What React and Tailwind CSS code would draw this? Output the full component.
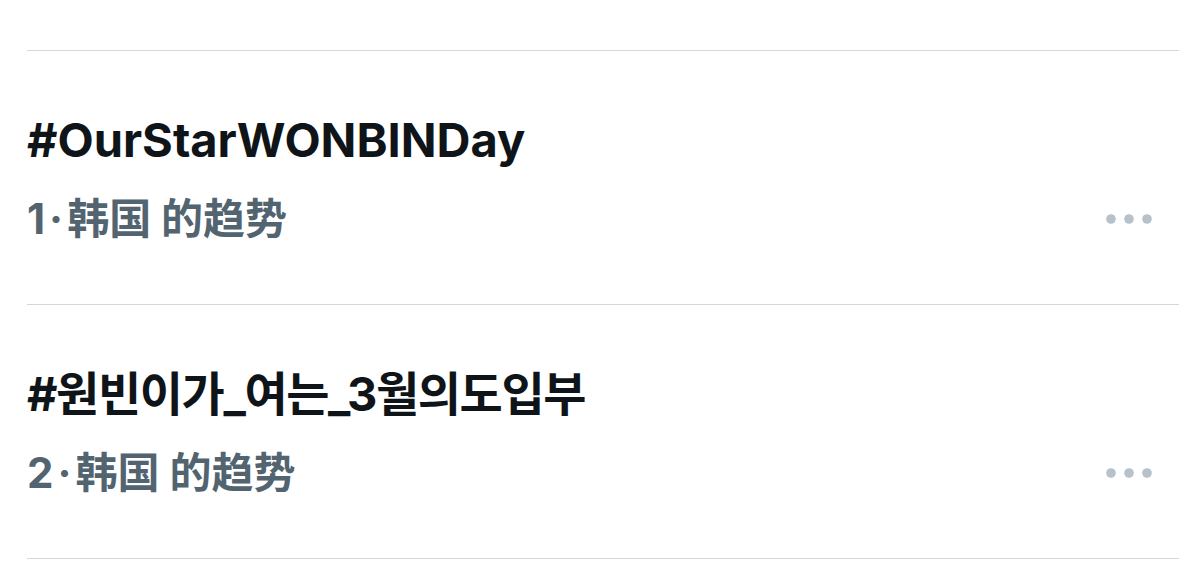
const trends = [
  { rank: 1, tag: '#OurStarWONBINDay', tracking: 'tracking-normal' },
  { rank: 2, tag: '#원빈이가_여는_3월의도입부', tracking: 'tracking-[-1.4px]' },
]

function MoreDots() {
  return (
    <svg width="48" height="12" viewBox="0 0 48 12" className="shrink-0">
      <circle cx="6" cy="6" r="4.8" fill="#b6c1ca" />
      <circle cx="24" cy="6" r="4.8" fill="#b6c1ca" />
      <circle cx="42" cy="6" r="4.8" fill="#b6c1ca" />
    </svg>
  )
}

export default function App() {
  return (
    <div
      className="w-[1199px] h-[576px] bg-white overflow-hidden"
      style={{ fontFamily: 'Inter, "Noto Sans CJK KR", "Noto Sans CJK SC", sans-serif' }}
    >
      <div className="mt-[50px] ml-[27px] mr-[20px] border-t border-[#d6d6d6]">
        {trends.map(t => (
          <div key={t.rank} className="h-[254px] border-b border-[#d6d6d6] pt-[61px] flex items-start">
            <div className="flex-1 min-w-0">
              <p className={`text-[47px] leading-[56px] font-bold text-[#0f1419] ${t.tracking}`}>{t.tag}</p>
              <p className="mt-[27px] text-[42px] leading-[48px] font-bold text-[#536471]"
                style={{ fontFamily: 'Inter, "Noto Sans CJK SC", sans-serif' }}>
                {t.rank}<span className="mx-[4px]">·</span>韩国 的趋势
              </p>
            </div>
            <div className="mt-[101px] mr-[26px]">
              <MoreDots />
            </div>
          </div>
        ))}
      </div>
    </div>
  )
}
